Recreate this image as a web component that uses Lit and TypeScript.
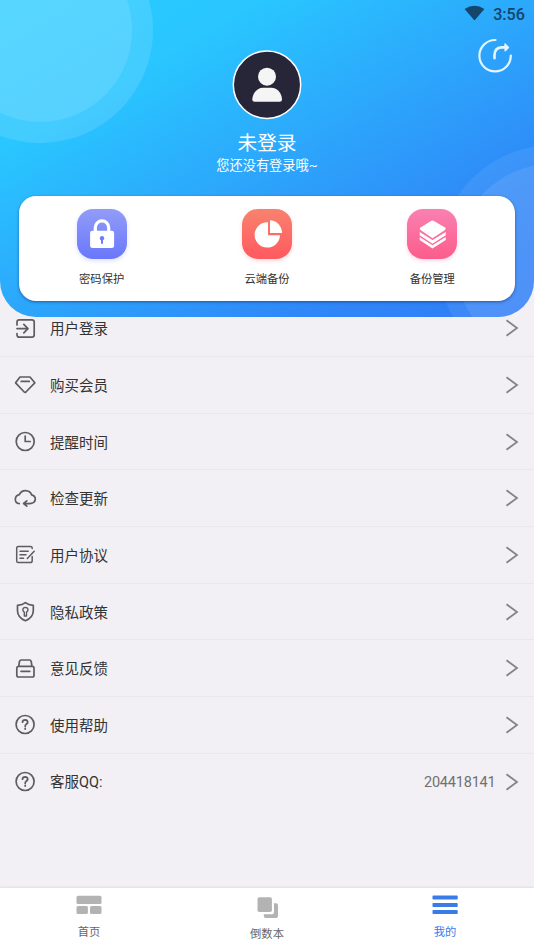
import { LitElement, html, css, svg } from "lit";
import { customElement } from "lit/decorators.js";

const fonts = css`Roboto, "Noto Sans CJK SC", sans-serif`;

const icons: Record<string, unknown> = {
  login: svg`<path d="M3 8V5.2Q3 2.9 5.3 2.9H17.8Q20.2 2.9 20.2 5.2V17.8Q20.2 20.2 17.8 20.2H5.3Q3 20.2 3 17.8V16.6M3 11.6H13.8M9.8 7.4L14 11.6L9.8 15.8"/>`,
  vip: svg`<path d="M6 4H16L20.8 9.8L11.9 19Q11 19.8 10.2 19L1.6 9.8ZM7.2 8.4H15.3"/>`,
  clock: svg`<circle cx="11.2" cy="11.5" r="9"/><path d="M11.2 6V11.5H16.2"/>`,
  cloud: svg`<path d="M5.3 16.7Q1.3 16.2 1.3 12.3Q1.5 8.6 5.3 7.7Q7.3 3.6 11.6 3.7Q16.2 3.9 17.6 7.9Q21.6 9 21.3 12.6Q20.8 15.7 17.2 16.3Q14.5 16.7 10.5 16.5M12.8 13.8L9.6 16.5L12.8 19.2"/>`,
  agreement: svg`<path d="M18.2 5.6V5Q18.2 3.4 16.5 3.4H4.3Q2.7 3.4 2.7 5V18Q2.7 19.6 4.3 19.6H16.4Q18.2 19.6 18.2 17.8V13.5M6 8.3H14.2M6 11.8H12M6 15.3H9.6M20.2 8.2L13.3 15.4" stroke-width="1.5"/>`,
  privacy: svg`<path d="M11.4 2.7Q14.2 5.1 19.3 5.3V11Q19 17.8 11.4 20.8Q3.8 17.8 3.5 11V5.3Q8.6 5.1 11.4 2.7Z"/><path d="M10.3 12.2V16H12.5V12.2Q14 11.4 14 9.8Q13.8 7.5 11.4 7.4Q9 7.5 8.8 9.8Q8.8 11.4 10.3 12.2Z" stroke-width="1.4"/>`,
  feedback: svg`<path d="M4.7 9.3L5.5 4.5Q5.8 3 7.3 3H15.4Q16.9 3 17.2 4.5L18 9.3M4.3 9.3H18.3Q20 9.3 20 11V18.2Q20 20 18.3 20H4.5Q2.8 20 2.8 18.2V11Q2.8 9.3 4.3 9.3ZM7 14.3H15.8"/>`,
  help: svg`<circle cx="11.1" cy="11.5" r="9"/><path d="M8.5 9.2Q8.6 6.8 11.2 6.8Q13.7 7 13.7 9.1Q13.6 10.5 12.2 11.3Q11.2 11.9 11.2 13.3M11.2 15.5V16.1" stroke-width="1.8"/>`,
};

const rows = [
  { icon: "login", label: "用户登录" },
  { icon: "vip", label: "购买会员" },
  { icon: "clock", label: "提醒时间" },
  { icon: "cloud", label: "检查更新" },
  { icon: "agreement", label: "用户协议" },
  { icon: "privacy", label: "隐私政策" },
  { icon: "feedback", label: "意见反馈" },
  { icon: "help", label: "使用帮助" },
  { icon: "help", label: "客服QQ:", value: "204418141" },
];

@customElement("profile-header")
class ProfileHeader extends LitElement {
  static styles = css`
    :host {
      display: flex;
      flex-direction: column;
      height: 317px;
      box-sizing: border-box;
      position: relative;
      z-index: 1;
      overflow: hidden;
      border-radius: 0 0 36px 36px;
      background: linear-gradient(150deg, #29ccff 0%, #29c6ff 24%, #2f87f8 78%, #2f7cf7 100%);
      color: #fff;
      font-family: ${fonts};
    }
    .rings { position: absolute; inset: 0; width: 534px; height: 317px; }
    .status, .avatar, .title, .subtitle, .card { position: relative; }
    .status {
      display: flex;
      justify-content: flex-end;
      align-items: center;
      gap: 8px;
      height: 28px;
      padding-right: 9px;
      color: #13466a;
      font-size: 16.2px;
      font-weight: 500;
    }
    .clock { line-height: 28px; padding-top: 2px; }
    .wifi { width: 21px; height: 16px; margin-top: -2px; }
    .share { position: absolute; left: 476px; top: 37px; width: 38px; height: 38px; }
    .avatar {
      width: 70px;
      height: 70px;
      margin: 22px auto 0;
    }
    .title { text-align: center; font-size: 19.7px; line-height: 26px; margin-top: 11px; }
    .subtitle { text-align: center; font-size: 13.2px; line-height: 20px; margin-top: -1px; }
    .card {
      display: grid;
      grid-template-columns: repeat(3, 1fr);
      height: 104.5px;
      box-sizing: border-box;
      margin: 20px 19px 0;
      padding-top: 13px;
      border-radius: 17px;
      background: #fff;
      box-shadow: 0 1px 3px rgba(0, 30, 90, 0.5);
    }
    .item { display: flex; flex-direction: column; align-items: center; gap: 12px; }
    .tile { width: 50px; height: 50px; border-radius: 16px; }
    .tile svg { display: block; width: 50px; height: 50px; }
    .lock { background: linear-gradient(#929cf8, #6977fb); box-shadow: 0 2px 4px rgba(105, 119, 251, 0.22); }
    .pie { background: linear-gradient(#f9826e, #ff595f); box-shadow: 0 2px 4px rgba(255, 89, 95, 0.22); }
    .layers { background: linear-gradient(#f981b1, #fc5c8c); box-shadow: 0 2px 4px rgba(252, 92, 140, 0.22); }
    .label { color: #333; font-size: 11.3px; line-height: 18px; }
  `;

  render() {
    return html`
      <svg class="rings" viewBox="0 0 534 317" fill="#fff">
        <circle cx="40" cy="30" r="113" fill-opacity="0.12" />
        <circle cx="40" cy="30" r="92" fill-opacity="0.11" />
        <circle cx="553" cy="260" r="115" fill-opacity="0.07" />
        <circle cx="554" cy="262" r="98.5" fill-opacity="0.09" />
      </svg>
      <div class="status">
        <svg class="wifi" viewBox="0 0 21 16" fill="currentColor"><path d="M.6 4Q10.5-2.6 20.4 4L10.5 15.6Z" /></svg>
        <span class="clock">3:56</span>
      </div>
      <svg class="share" viewBox="0 0 38 38" fill="none" stroke="#e3f6ff" stroke-width="2.2" stroke-linecap="round" stroke-linejoin="round">
        <path d="M19.5 3A15.7 15.7 0 1 0 34.8 18.5" />
        <path d="M18.5 21.3V18Q18.6 11 25.5 10.4H31" stroke-width="2.6" />
        <path d="M29 7L32.5 10.4L29.2 13.8Z" fill="#e3f6ff" stroke-width="1.4" />
      </svg>
      <svg class="avatar" viewBox="0 0 70 70">
        <circle cx="35" cy="34.7" r="33.7" fill="#272538" stroke="#fff" stroke-width="1.5" />
        <circle cx="35" cy="26.7" r="9" fill="#f5f5f5" />
        <path d="M20.3 49.5C20.7 42 26 37.8 31 37.8H39.5C44.4 37.8 49.6 42 50 49.5Q50 51.8 47.6 51.8H22.7Q20.3 51.8 20.3 49.5Z" fill="#f5f5f5" />
      </svg>
      <div class="title">未登录</div>
      <div class="subtitle">您还没有登录哦~</div>
      <div class="card">
        <div class="item">
          <div class="tile lock">
            <svg viewBox="0 0 50 50">
              <path d="M18.3 23V18.6A6.7 6.7 0 0 1 31.7 18.6V23" fill="none" stroke="#fff" stroke-width="3.2" />
              <rect x="13.1" y="21.8" width="24" height="17.2" rx="2.3" fill="#fff" />
              <circle cx="25" cy="29.2" r="2.2" fill="#6f7cfb" />
              <path d="M25 29V34" stroke="#6f7cfb" stroke-width="2" stroke-linecap="round" />
            </svg>
          </div>
          <span class="label">密码保护</span>
        </div>
        <div class="item">
          <div class="tile pie">
            <svg viewBox="0 0 50 50" fill="#fff">
              <path d="M26 13.2A12.7 12.7 0 1 0 38 26.3H26Z" />
              <path d="M28 11.3A12.6 12.6 0 0 1 40 24H28Z" />
            </svg>
          </div>
          <span class="label">云端备份</span>
        </div>
        <div class="item">
          <div class="tile layers">
            <svg viewBox="0 0 50 50" fill="#fff">
              <path d="M24.5 11.7Q25.5 11.2 26.5 11.7L38 18.5Q39.5 19.4 38 20.9L25.5 29.2L13.5 20.9Q12 19.5 13.5 18.5Z" />
              <path d="M12.7 23L25.5 31L38.7 23V26.3L25.5 34.8L12.7 26.3Z" />
              <path d="M12.7 28L25.5 36.2L38.7 28V31L25.5 39.4L12.7 31Z" />
            </svg>
          </div>
          <span class="label">备份管理</span>
        </div>
      </div>
    `;
  }
}

@customElement("tab-bar")
class TabBar extends LitElement {
  static styles = css`
    :host {
      display: grid;
      grid-template-columns: repeat(3, 1fr);
      height: 61px;
      background: #fff;
      box-shadow: 0 -1px 2px rgba(0, 0, 0, 0.07);
      font-family: ${fonts};
    }
    .tab { display: flex; flex-direction: column; align-items: center; color: #666; padding-top: 7px; }
    .tab svg { width: 26px; height: 22px; color: #b3b3b3; }
    .label { font-size: 11.3px; line-height: 16px; margin-top: 8px; }
    .middle { padding-top: 9px; }
    .active, .active svg { color: #377ce7; }
  `;

  render() {
    return html`
      <div class="tab">
        <svg viewBox="0 0 26 22" fill="currentColor">
          <rect x=".5" y=".7" width="25" height="8.3" rx="1.5" />
          <rect x=".5" y="11" width="11.4" height="8" rx="1.5" />
          <rect x="14" y="11" width="11.5" height="8" rx="1.5" />
        </svg>
        <span class="label">首页</span>
      </div>
      <div class="tab middle">
        <svg viewBox="0 0 26 22" fill="currentColor">
          <rect x="3.5" y=".3" width="14.4" height="14.8" rx="1.8" />
          <path d="M20 6.3H22Q24 6.3 24 8.3V19Q24 21 22 21H11.8Q9.8 21 9.8 19V17.2H18Q20 17.2 20 15.2Z" />
        </svg>
        <span class="label">倒数本</span>
      </div>
      <div class="tab active">
        <svg viewBox="0 0 26 22" fill="currentColor">
          <rect x=".5" y=".6" width="25.2" height="4" rx=".8" />
          <rect x=".5" y="8" width="25.2" height="4" rx=".8" />
          <rect x=".5" y="15" width="25.2" height="4" rx=".8" />
        </svg>
        <span class="label">我的</span>
      </div>
    `;
  }
}

@customElement("app-root")
class AppRoot extends LitElement {
  static styles = css`
    :host {
      display: flex;
      flex-direction: column;
      height: 949px;
      overflow: hidden;
      background: #f2f0f4;
      font-family: ${fonts};
    }
    profile-header, tab-bar { flex: none; }
    .list { flex: 1; margin-top: -16.6px; }
    .row {
      display: flex;
      align-items: center;
      height: 56.67px;
      box-sizing: border-box;
      padding: 0 14px 0 13.7px;
      border-bottom: 1px solid #eae8ec;
    }
    .row:last-child { border-bottom: none; }
    .icon {
      width: 23px;
      height: 23px;
      margin-right: 13.3px;
      fill: none;
      stroke: #5e5c60;
      stroke-width: 1.7;
      stroke-linecap: round;
      stroke-linejoin: round;
    }
    .name { flex: 1; color: #333; font-size: 14.5px; line-height: 22px; margin-top: 4px; }
    .row:last-child .name { margin-top: 3px; }
    .value { color: #707070; font-size: 14.5px; letter-spacing: -0.2px; line-height: 22px; margin: 3px 8.5px 0 0; }
    .chevron { width: 16px; height: 20px; fill: none; stroke: #858387; stroke-width: 1.8; }
  `;

  render() {
    return html`
      <profile-header></profile-header>
      <div class="list">
        ${rows.map(
          (row) => html`
            <div class="row">
              <svg class="icon" viewBox="0 0 23 23">${icons[row.icon]}</svg>
              <span class="name">${row.label}</span>
              ${row.value ? html`<span class="value">${row.value}</span>` : null}
              <svg class="chevron" viewBox="0 0 16 20"><path d="M2.5 2.2L13 10L2.5 17.8" /></svg>
            </div>
          `
        )}
      </div>
      <tab-bar></tab-bar>
    `;
  }
}
